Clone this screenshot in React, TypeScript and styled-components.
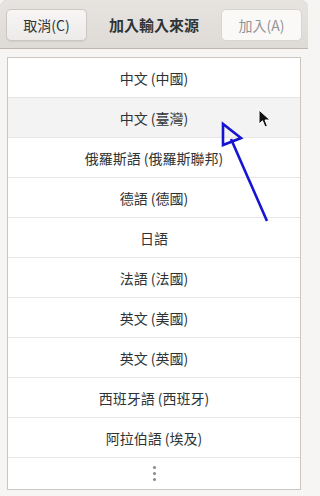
import styled, { createGlobalStyle } from "styled-components";

const GlobalStyle = createGlobalStyle`
  html, body {
    margin: 0;
    padding: 0;
    background: #f6f5f4;
    overflow: hidden;
  }
  body {
    font-family: "Noto Sans CJK TC", "Noto Sans", sans-serif;
    color: #2e3436;
  }
`;

const sources = [
  "中文 (中國)",
  "中文 (臺灣)",
  "俄羅斯語 (俄羅斯聯邦)",
  "德語 (德國)",
  "日語",
  "法語 (法國)",
  "英文 (美國)",
  "英文 (英國)",
  "西班牙語 (西班牙)",
  "阿拉伯語 (埃及)",
];

const App = () => {
  return (
    <>
      <GlobalStyle />
      <Window>
        <HeaderBar>
          <Button>取消(C)</Button>
          <Title>加入輸入來源</Title>
          <Button disabled>加入(A)</Button>
        </HeaderBar>
        <Content>
          <List>
            {sources.map((name, i) => (
              <Row key={name} $hover={i === 1}>
                {name}
              </Row>
            ))}
            <MoreRow>
              <Dot />
              <Dot />
              <Dot />
            </MoreRow>
          </List>
        </Content>
        <Annotation width="308" height="496" viewBox="0 0 308 496">
          <path
            d="M223 124 L223 145 L241 138 Z"
            fill="none"
            stroke="#1414d2"
            strokeWidth="2.6"
            strokeLinejoin="miter"
          />
          <path d="M231 139 L267 221" stroke="#1414d2" strokeWidth="2.6" />
        </Annotation>
        <Cursor width="14" height="20" viewBox="0 0 14 20">
          <path
            d="M1 1 L1 15 L4.5 11.8 L7 18 L9.4 17 L7 11 L12 11 Z"
            fill="#111"
            stroke="#fff"
            strokeWidth="1"
            strokeLinejoin="round"
          />
        </Cursor>
      </Window>
    </>
  );
};

export default App;

const Window = styled.div`
  position: relative;
  width: 308px;
  height: 496px;
  background: #f6f5f4;
  border-radius: 7px 7px 0 0;
  overflow: hidden;
  box-shadow: inset 0 1px 0 #c8c5c2;
`;

const HeaderBar = styled.div`
  height: 49px;
  box-sizing: border-box;
  display: flex;
  align-items: center;
  justify-content: space-between;
  padding: 0 6px;
  background: linear-gradient(to bottom, #e6e3e0, #dedbd7);
  border-bottom: 1px solid #bfb8b1;
`;

const Button = styled.button`
  width: 81px;
  height: 32px;
  margin-top: 1px;
  box-sizing: border-box;
  border-radius: 5px;
  border: 1px solid #cdc7c2;
  background: linear-gradient(to bottom, #f7f6f5, #edebe9);
  box-shadow: 0 1px 1px rgba(0, 0, 0, 0.07);
  font-family: "Noto Sans CJK TC", "Noto Sans", sans-serif;
  font-size: 14px;
  color: #2e3436;
  padding: 0;

  &:disabled {
    background: #faf9f8;
    border-color: #d8d4d0;
    color: #929595;
    box-shadow: none;
  }
`;

const Title = styled.div`
  font-size: 15px;
  font-weight: 700;
  color: #2e3436;
  margin-top: 1px;
`;

const Content = styled.div`
  padding: 8px 7px 6px 7px;
`;

const List = styled.div`
  border: 1px solid #cdc7c2;
  background: #ffffff;
`;

const Row = styled.div<{ $hover?: boolean }>`
  height: 39px;
  display: flex;
  align-items: center;
  justify-content: center;
  font-size: 14px;
  color: #2e3436;
  border-bottom: 1px solid #e6e6e6;
  background: ${(p) => (p.$hover ? "#f3f3f3" : "#ffffff")};
`;

const MoreRow = styled.div`
  height: 31px;
  display: flex;
  flex-direction: column;
  align-items: center;
  justify-content: center;
  gap: 3px;
`;

const Dot = styled.span`
  width: 3px;
  height: 3px;
  border-radius: 50%;
  background: #8a8a8a;
`;

const Annotation = styled.svg`
  position: absolute;
  left: 0;
  top: 0;
  pointer-events: none;
`;

const Cursor = styled.svg`
  position: absolute;
  left: 258px;
  top: 109px;
`;
